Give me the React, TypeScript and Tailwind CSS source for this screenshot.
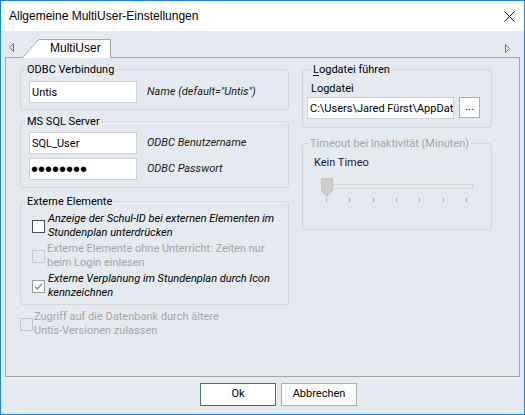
import React from "react";
import clsx from "clsx";

function Group({
  title,
  className,
  disabled,
  legendClass,
  children,
}: {
  title: React.ReactNode;
  className?: string;
  disabled?: boolean;
  legendClass?: string;
  children?: React.ReactNode;
}) {
  return (
    <fieldset className={clsx("m-0 p-0 border border-[#d3d7dd] rounded-[3px] min-w-0", className)}>
      <legend
        className={clsx(
          "p-0 px-[2px] leading-[15px] whitespace-nowrap",
          legendClass ?? "ml-[4px]",
          disabled ? "text-[#a6a6a6]" : "text-black"
        )}
      >
        {title}
      </legend>
      {children}
    </fieldset>
  );
}

function Field({ value, className }: { value: string; className?: string }) {
  return (
    <input
      readOnly
      value={value}
      className={clsx(
        "h-[22px] border border-[#cfd2d6] bg-white pl-[2px] text-black outline-none",
        className
      )}
    />
  );
}

function Check({ checked, disabled }: { checked?: boolean; disabled?: boolean }) {
  return (
    <svg width="13" height="13" viewBox="0 0 13 13" className="shrink-0">
      <rect
        x="0.5"
        y="0.5"
        width="12"
        height="12"
        fill={disabled ? "#e5e9f0" : "#ffffff"}
        stroke={disabled ? "#c3c9d3" : checked ? "#9a9a9a" : "#4d4d4d"}
      />
      {checked && (
        <path d="M3 6.5 L5.3 9 L10 3.8" fill="none" stroke="#8a8a8a" strokeWidth="1.3" />
      )}
    </svg>
  );
}

export default function App() {
  return (
    <div className="w-[525px] h-[415px] border border-[#1883d7] bg-[#e5e9f0] flex flex-col font-['Roboto','Liberation_Sans',sans-serif] text-[11px] text-black overflow-hidden">
      {/* title bar */}
      <div className="h-[30px] bg-white flex items-center pl-[8px] shrink-0">
        <span className="text-[12px] font-['Liberation_Sans',Arial,sans-serif]">Allgemeine MultiUser-Einstellungen</span>
        <svg width="11" height="11" viewBox="0 0 11 11" className="ml-auto mr-[9px]">
          <path d="M0.5 0.5 L10.5 10.5 M10.5 0.5 L0.5 10.5" stroke="#111" strokeWidth="1" />
        </svg>
      </div>

      {/* tab strip */}
      <div className="h-[27px] flex items-end shrink-0 -mb-px relative z-10">
        <svg width="5" height="9" viewBox="0 0 5 9" className="ml-[8px] mb-[6px]">
          <polygon points="4.5,0.5 0.5,4.5 4.5,8.5" fill="none" stroke="#6f6f6f" />
        </svg>
        <div className="ml-[8px] flex items-end">
          <svg width="17" height="19" viewBox="0 0 17 19" className="block">
            <polygon points="0,19 16,0.5 17,0.5 17,19" fill="#ffffff" />
            <path d="M0.5 19 L16.5 0.5" stroke="#a8a8a8" />
          </svg>
          <div className="h-[19px] w-[72px] bg-white border-t border-r border-[#a8a8a8] pl-[11px] leading-[17px] text-[12px] font-['Liberation_Sans',Arial,sans-serif]">
            MultiUser
          </div>
        </div>
        <svg width="5" height="9" viewBox="0 0 5 9" className="ml-auto mr-[14px] mb-[5px]">
          <polygon points="0.5,0.5 4.5,4.5 0.5,8.5" fill="none" stroke="#6f6f6f" />
        </svg>
      </div>

      {/* tab page */}
      <div className="mx-[4px] h-[320px] shrink-0 border border-[#a3a3a3] flex gap-[13px] pl-[14px] pt-[4px]">
        {/* left column */}
        <div className="w-[269px] flex flex-col">
          <Group title="ODBC Verbindung" className="pb-[6px]">
            <div className="flex items-center mt-[4px] pl-[8px]">
              <Field value="Untis" className="w-[108px]" />
              <span className="ml-[10px] italic text-[#1a1a1a] whitespace-nowrap">Name (default="Untis")</span>
            </div>
          </Group>

          <Group title="MS SQL Server" className="mt-[4px] pb-[7px]">
            <div className="flex flex-col gap-[4px] mt-[3px] pl-[8px]">
              <div className="flex items-center">
                <Field value="SQL_User" className="w-[108px]" />
                <span className="ml-[10px] italic text-[#1a1a1a] whitespace-nowrap">ODBC Benutzername</span>
              </div>
              <div className="flex items-center">
                <div className="h-[22px] w-[108px] border border-[#cfd2d6] bg-white pl-[1px] flex items-center text-[20px] leading-none font-['Liberation_Sans',Arial,sans-serif] overflow-hidden">
                  ••••••••
                </div>
                <span className="ml-[10px] italic text-[#1a1a1a] whitespace-nowrap">ODBC Passwort</span>
              </div>
            </div>
          </Group>

          <Group title="Externe Elemente" className="mt-[6px] pb-[4px]">
            <div className="flex flex-col gap-[2px] mt-[3px] pl-[11px] leading-[14px] whitespace-nowrap">
              <div className="flex items-center gap-[3px]">
                <Check />
                <span className="italic">
                  Anzeige der Schul-ID bei externen Elementen im
                  <br />
                  Stundenplan unterdrücken
                </span>
              </div>
              <div className="flex items-center gap-[2px] text-[#a6a6a6]">
                <Check disabled />
                <span>
                  Externe Elemente ohne Unterricht: Zeiten nur
                  <br />
                  beim Login einlesen
                </span>
              </div>
              <div className="flex items-center gap-[3px]">
                <Check checked />
                <span className="italic">
                  Externe Verplanung im Stundenplan durch Icon
                  <br />
                  kennzeichnen
                </span>
              </div>
            </div>
          </Group>

          <div className="flex items-center gap-[1px] mt-[5px] leading-[14px] text-[#a6a6a6] whitespace-nowrap">
            <Check disabled />
            <span>
              Zugriff auf die Datenbank durch ältere
              <br />
              Untis-Versionen zulassen
            </span>
          </div>
        </div>

        {/* right column */}
        <div className="w-[190px] flex flex-col">
          <Group
            title={
              <>
                <span className="underline underline-offset-2">L</span>ogdatei führen
              </>
            }
            legendClass="ml-[8px]"
            className="pb-[8px]"
          >
            <div className="mt-[4px] ml-[8px] leading-[15px]">Logdatei</div>
            <div className="flex items-start pl-[4px] mt-[1px]">
              <Field value="C:\Users\Jared Fürst\AppData\Local" className="w-[147px] pl-[1px]" />
              <div className="ml-[5px] h-[21px] w-[21px] border border-[#adadad] bg-white flex items-center justify-center leading-none pb-[2px]">
                ...
              </div>
            </div>
          </Group>

          <Group title="Timeout bei Inaktivität (Minuten)" disabled legendClass="ml-[5px]" className="mt-[8px] h-[94px]">
            <div className="mt-[4px] ml-[11px] leading-[15px] text-[#1c1c3c]">Kein Timeo</div>
            <div className="flex items-start ml-[18px] mt-[8px]">
              <svg width="12" height="19" viewBox="0 0 12 19" className="block shrink-0">
                <polygon points="0.5,0.5 11.5,0.5 11.5,12.5 6,18.5 0.5,12.5" fill="#cdcdcd" stroke="#c4c4c4" />
              </svg>
              <div className="mt-[6px] h-[5px] w-[140px] border border-[#d4d4d4] bg-[#e7e7e7]" />
            </div>
            <div className="ml-[23px] mt-[1px] w-[141px] flex justify-between">
              {[0, 1, 2, 3, 4, 5, 6].map((i) => (
                <div key={i} className="w-px h-[4px] bg-[#b4b4b4]" />
              ))}
            </div>
          </Group>
        </div>
      </div>

      {/* buttons */}
      <div className="flex gap-[5px] pl-[199px] mt-[6px]">
        <div className="h-[23px] w-[76px] border border-[#4a6c9b] bg-white flex items-center justify-center">
          Ok
        </div>
        <div className="h-[23px] w-[76px] border border-[#adadad] bg-[#fdfdfd] flex items-center justify-center">
          Abbrechen
        </div>
      </div>
    </div>
  );
}
